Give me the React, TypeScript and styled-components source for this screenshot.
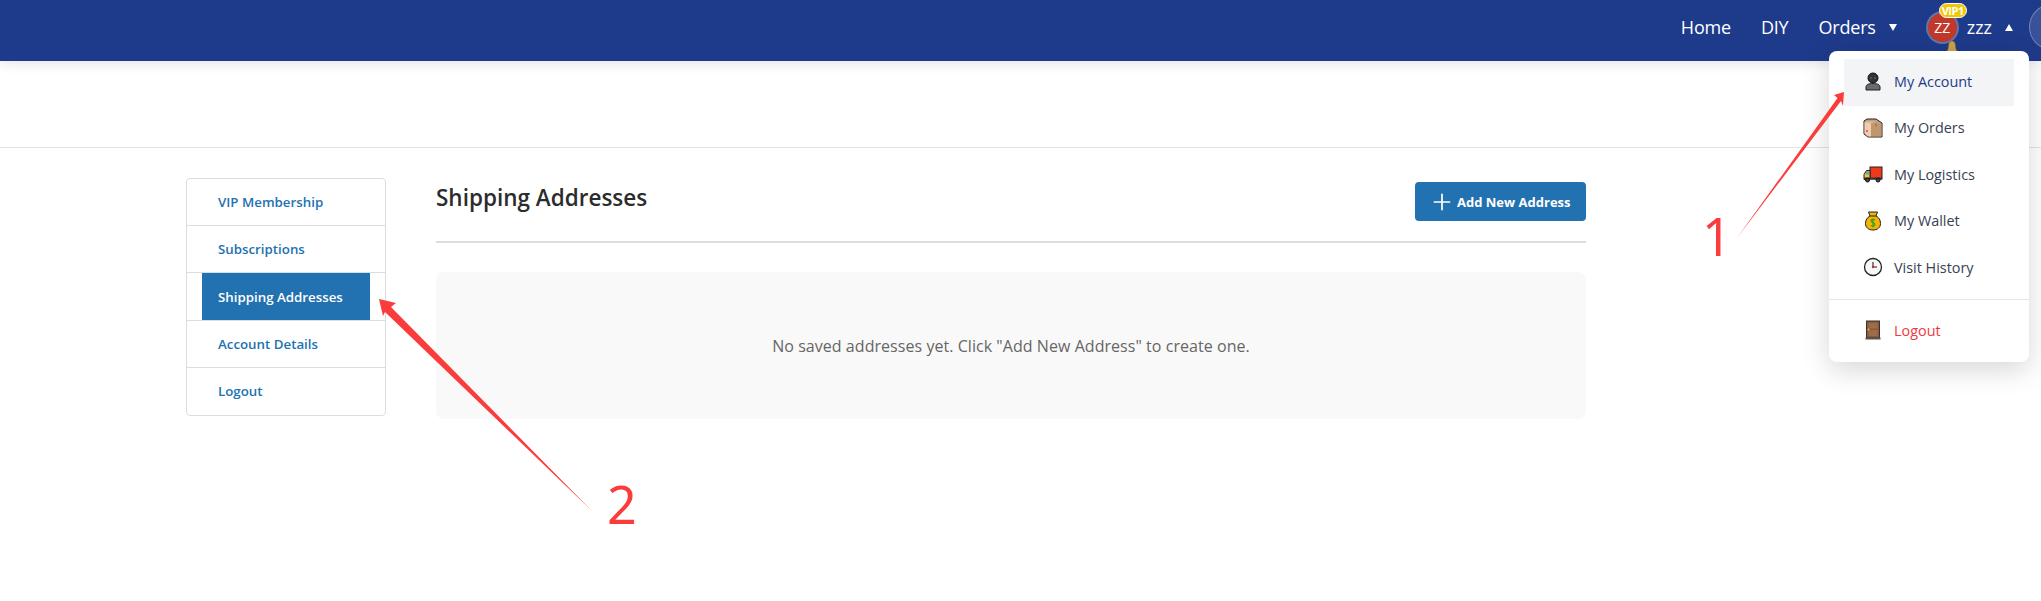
import styled, { createGlobalStyle } from 'styled-components';
import { Plus } from 'lucide-react';

const GlobalStyle = createGlobalStyle`
  html, body {
    margin: 0;
    padding: 0;
    background: #fff;
    font-family: 'Open Sans', 'Noto Sans', 'Liberation Sans', sans-serif;
    overflow: hidden;
  }
`;

const Page = styled.div`
  position: relative;
  width: 2041px;
  height: 601px;
  overflow: hidden;
`;

const Header = styled.header`
  height: 61px;
  box-sizing: border-box;
  padding-bottom: 7px;
  background: #1e3a8a;
  box-shadow: 0 2px 12px rgba(0, 0, 0, 0.12);
  display: flex;
  align-items: center;
  justify-content: flex-end;
  color: #fff;
  overflow: hidden;
  position: relative;
`;

const NavLink = styled.a<{ $gap?: number }>`
  font-size: 18px;
  letter-spacing: -0.2px;
  color: #fff;
  margin-right: ${props => props.$gap ?? 30}px;
`;

const Caret = styled.span<{ $up?: boolean; $gap: number; $left: number }>`
  width: 0;
  height: 0;
  border-left: 4.5px solid transparent;
  border-right: 4.5px solid transparent;
  border-${props => (props.$up ? 'bottom' : 'top')}: 7px solid #fff;
  margin-left: ${props => props.$left}px;
  margin-right: ${props => props.$gap}px;
`;

const Avatar = styled.div`
  position: relative;
  width: 29px;
  height: 29px;
  border-radius: 50%;
  background: #c0392b;
  box-shadow: 0 0 0 2px rgba(255, 255, 255, 0.3);
  display: flex;
  align-items: center;
  justify-content: center;
  font-size: 14px;
  color: #fff;
  margin-right: 10px;
`;

const VipBadge = styled.span`
  position: absolute;
  top: -10px;
  left: 11px;
  width: 28px;
  height: 15px;
  border-radius: 8px;
  background: #f0c808;
  border: 1px solid #fff;
  box-sizing: border-box;
  font-size: 11px;
  font-weight: 700;
  letter-spacing: -0.5px;
  line-height: 13px;
  text-align: center;
  color: #fff;
`;

const UserName = styled.span`
  font-size: 18px;
  color: #fff;
`;

const RoundButton = styled.div`
  width: 46px;
  height: 46px;
  flex-shrink: 0;
  border-radius: 50%;
  box-sizing: border-box;
  border: 1px solid rgba(255, 255, 255, 0.3);
  background: rgba(255, 255, 255, 0.12);
  margin-right: -34px;
`;

const BellWrap = styled.div`
  position: absolute;
  left: 1945px;
  top: 38px;
  width: 14px;
  height: 14px;
  z-index: 2;
`;

const SubBand = styled.div`
  height: 86px;
  border-bottom: 1px solid #e2e2e2;
`;

const Main = styled.main`
  display: flex;
  align-items: flex-start;
  gap: 50px;
  padding: 30px 0 0 186px;
`;

const Sidebar = styled.nav`
  width: 200px;
  box-sizing: border-box;
  border: 1px solid #ddd;
  border-radius: 4px;
`;

const SideRow = styled.div<{ $active?: boolean }>`
  height: ${props => (props.$active ? 48 : 47)}px;
  box-sizing: border-box;
  padding: 0 15px;
  border-bottom: 1px solid #ddd;
  &:last-child {
    border-bottom: none;
  }
`;

const SideLink = styled.a<{ $active?: boolean }>`
  display: flex;
  align-items: center;
  height: ${props => (props.$active ? 47 : 46)}px;
  padding: 0 16px;
  font-size: 13.3px;
  font-weight: 600;
  color: ${props => (props.$active ? '#fff' : '#2271b1')};
  background: ${props => (props.$active ? '#2271b1' : 'transparent')};
`;

const Content = styled.section`
  width: 1150px;
`;

const TitleRow = styled.div`
  display: flex;
  justify-content: space-between;
  align-items: flex-start;
  height: 65px;
  padding-top: 4px;
  box-sizing: border-box;
  border-bottom: 2px solid #ddd;
  margin-bottom: 29px;
`;

const Title = styled.h2`
  margin: 1px 0 0;
  font-size: 22.5px;
  font-weight: 600;
  line-height: 30px;
  color: #2c2c2c;
`;

const AddButton = styled.button`
  display: flex;
  align-items: center;
  gap: 5px;
  width: 171px;
  height: 39px;
  padding: 0 0 0 17px;
  border: none;
  border-radius: 4px;
  background: #2271b1;
  color: #fff;
  font-family: inherit;
  font-size: 13px;
  font-weight: 700;
`;

const EmptyBox = styled.div`
  height: 147px;
  border-radius: 8px;
  background: #f9f9f9;
  display: flex;
  align-items: center;
  justify-content: center;
  font-size: 16px;
  letter-spacing: 0.05px;
  color: #666;
`;

const Menu = styled.div`
  position: absolute;
  left: 1829px;
  top: 51px;
  width: 200px;
  height: 311px;
  box-sizing: border-box;
  padding: 8px 0;
  background: #fff;
  border-radius: 8px;
  box-shadow: 0 8px 28px rgba(0, 0, 0, 0.16);
  z-index: 3;
`;

const MenuItem = styled.a<{ $hover?: boolean; $danger?: boolean }>`
  display: flex;
  align-items: center;
  gap: 11px;
  height: 46.5px;
  box-sizing: border-box;
  margin: 0 15px;
  padding: 0 0 2px 19px;
  font-size: 14.4px;
  color: ${props => (props.$danger ? '#f0383f' : props.$hover ? '#1e3a8a' : '#374151')};
  background: ${props => (props.$hover ? '#f3f4f6' : 'transparent')};
`;

const MenuDivider = styled.hr`
  border: none;
  border-top: 1px solid #e5e7eb;
  margin: 7.5px 0 8px;
`;

const ArrowLayer = styled.svg`
  position: absolute;
  inset: 0;
  z-index: 4;
  pointer-events: none;
`;

const StepNumber = styled.span<{ $x: number; $y: number }>`
  position: absolute;
  left: ${props => props.$x}px;
  top: ${props => props.$y}px;
  z-index: 4;
  font-family: 'Noto Sans', sans-serif;
  font-size: 52px;
  line-height: 60px;
  color: #fa3c3c;
`;

function PersonIcon() {
  return (
    <svg width="20" height="20" viewBox="0 0 20 20">
      <circle cx="10" cy="7" r="5" fill="#333" stroke="#111" />
      <path d="M3 19v-3c0-2.500 3-3.500 7-3.500s7 1 7 3.500v3z" fill="#6b6b6b" stroke="#222" />
      <circle cx="8" cy="7" r="0.8" fill="#777" />
      <circle cx="12" cy="7" r="0.8" fill="#777" />
    </svg>
  );
}

function BoxIcon() {
  return (
    <svg width="20" height="20" viewBox="0 0 20 20">
      <path d="M1 3l3-2h9l6 4v14H5l-4-3z" fill="#c89f7c" stroke="#222" strokeLinejoin="round" />
      <path d="M1.500 3.500h11l-2 .5L8 5.500z" fill="#e2bd9b" />
      <path d="M1.500 4l6.500 1.500V18.500H5l-3.500-3z" fill="#f0cdb0" />
      <path d="M8 5.500l10.500 0v13H8z" fill="#c0966f" />
      <path d="M12 5.500h2v3h-2z" fill="#a5805d" />
      <circle cx="4" cy="13" r="1" fill="#e3405a" />
    </svg>
  );
}

function TruckIcon() {
  return (
    <svg width="20" height="20" viewBox="0 0 20 20">
      <rect x="7" y="3" width="12" height="12" fill="#f0381c" stroke="#222" />
      <path d="M7 6.500H3.500L1 10.500v5h6z" fill="#f4c430" stroke="#222" />
      <path d="M3.800 7.500H6v3H2.500z" fill="#4ea5d9" />
      <rect x="1" y="13.500" width="18" height="2" fill="#333" />
      <circle cx="4.500" cy="16" r="2" fill="#444" stroke="#111" />
      <circle cx="15" cy="16" r="2" fill="#444" stroke="#111" />
    </svg>
  );
}

function BagIcon() {
  return (
    <svg width="20" height="20" viewBox="0 0 20 20">
      <path d="M5.500 1h9l-1.500 4c3 1.500 4.500 4 4.500 7.500 0 4-3 6.500-7.500 6.500s-7.500-2.500-7.500-6.500C2.500 9 4 6.500 7 5z" fill="#f5b400" stroke="#222" />
      <path d="M7 5h6" stroke="#222" />
      <path d="M12 9c-1-1-4-1-4 .8S12 11.500 12 13.500s-3 2-4 .8M10 7.500v9" fill="none" stroke="#2a9d2a" strokeWidth="1.100" />
    </svg>
  );
}

function ClockIcon() {
  return (
    <svg width="20" height="20" viewBox="0 0 20 20">
      <circle cx="10" cy="10" r="8.500" fill="#f7f7f7" stroke="#222" strokeWidth="1.300" />
      <path d="M10 5v5H14" fill="none" stroke="#222" strokeWidth="1.100" />
      <circle cx="10" cy="10" r="1.200" fill="#e3202a" />
    </svg>
  );
}

function DoorIcon() {
  return (
    <svg width="20" height="20" viewBox="0 0 20 20">
      <rect x="3.500" y="1" width="13" height="17" fill="#8b5a3c" stroke="#333" />
      <rect x="5.500" y="3" width="9" height="5.500" fill="#a06c48" />
      <rect x="5.500" y="10" width="9" height="6" fill="#a06c48" />
      <circle cx="5.500" cy="9.500" r="0.900" fill="#e8c040" />
      <rect x="2.500" y="17.500" width="15" height="2" fill="#555" />
    </svg>
  );
}

const sideLinks = ['VIP Membership', 'Subscriptions', 'Shipping Addresses', 'Account Details', 'Logout'];

const menuLinks = [
  { label: 'My Account', icon: <PersonIcon />, hover: true },
  { label: 'My Orders', icon: <BoxIcon /> },
  { label: 'My Logistics', icon: <TruckIcon /> },
  { label: 'My Wallet', icon: <BagIcon /> },
  { label: 'Visit History', icon: <ClockIcon /> },
];

export default function App() {
  return (
    <Page>
      <GlobalStyle />
      <Header>
        <NavLink>Home</NavLink>
        <NavLink>DIY</NavLink>
        <NavLink $gap={0}>Orders</NavLink>
        <Caret $left={13} $gap={31} />
        <Avatar>
          ZZ
          <VipBadge>VIP1</VipBadge>
        </Avatar>
        <UserName>zzz</UserName>
        <Caret $up $left={13} $gap={16} />
        <RoundButton />
      </Header>
      <BellWrap>
        <svg width="14" height="14" viewBox="0 0 14 14">
          <path d="M7 0c-2.500 0-3.500 2-3.500 5 0 3-1.500 5-2.500 7h12c-1-2-2.500-4-2.500-7 0-3-1-5-3.500-5z" fill="#c9a24a" stroke="#7a5f20" strokeWidth="0.500" />
        </svg>
      </BellWrap>
      <SubBand />
      <Main>
        <Sidebar>
          {sideLinks.map(label => {
            const active = label === 'Shipping Addresses';
            return (
              <SideRow key={label} $active={active}>
                <SideLink $active={active}>{label}</SideLink>
              </SideRow>
            );
          })}
        </Sidebar>
        <Content>
          <TitleRow>
            <Title>Shipping Addresses</Title>
            <AddButton>
              <Plus size={26} strokeWidth={1.6} style={{ margin: '0 -3px 0 -3px' }} />
              Add New Address
            </AddButton>
          </TitleRow>
          <EmptyBox>No saved addresses yet. Click "Add New Address" to create one.</EmptyBox>
        </Content>
      </Main>
      <Menu>
        {menuLinks.map(item => (
          <MenuItem key={item.label} $hover={item.hover}>
            {item.icon}
            {item.label}
          </MenuItem>
        ))}
        <MenuDivider />
        <MenuItem $danger>
          <DoorIcon />
          Logout
        </MenuItem>
      </Menu>
      <ArrowLayer width="2041" height="601" viewBox="0 0 2041 601">
        <polygon points="1844,92 1834,95 1837.5,98 1737,238 1841,101 1843,106" fill="#fa3c3c" />
        <polygon points="379,299 396,303 391,307 592,511 385,312 383,316" fill="#fa3c3c" />
      </ArrowLayer>
      <StepNumber $x={1702} $y={206}>1</StepNumber>
      <StepNumber $x={607} $y={474}>2</StepNumber>
    </Page>
  );
}
